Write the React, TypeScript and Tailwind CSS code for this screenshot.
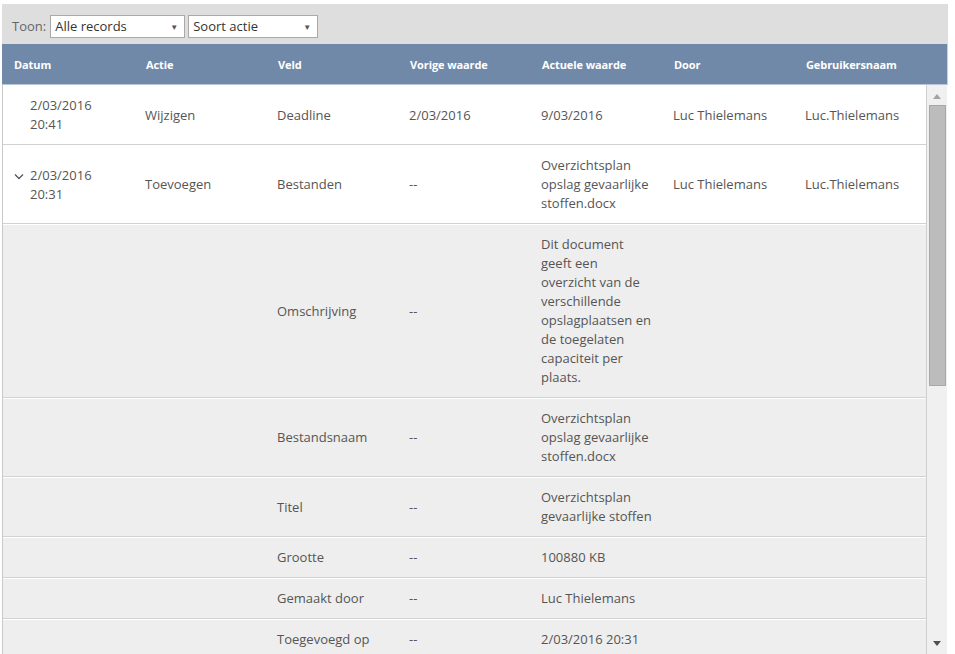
import React from "react";

const cols = "grid grid-cols-[repeat(7,132px)]";

type Row = {
  date?: [string, string];
  chevron?: boolean;
  actie?: string;
  veld: string;
  vorige: string;
  actuele: string[];
  door?: string;
  gebruiker?: string;
  gray?: boolean;
};

const rows: Row[] = [
  { date: ["2/03/2016", "20:41"], actie: "Wijzigen", veld: "Deadline", vorige: "2/03/2016", actuele: ["9/03/2016"], door: "Luc Thielemans", gebruiker: "Luc.Thielemans" },
  { date: ["2/03/2016", "20:31"], chevron: true, actie: "Toevoegen", veld: "Bestanden", vorige: "--", actuele: ["Overzichtsplan", "opslag gevaarlijke", "stoffen.docx"], door: "Luc Thielemans", gebruiker: "Luc.Thielemans" },
  { gray: true, veld: "Omschrijving", vorige: "--", actuele: ["Dit document", "geeft een", "overzicht van de", "verschillende", "opslagplaatsen en", "de toegelaten", "capaciteit per", "plaats."] },
  { gray: true, veld: "Bestandsnaam", vorige: "--", actuele: ["Overzichtsplan", "opslag gevaarlijke", "stoffen.docx"] },
  { gray: true, veld: "Titel", vorige: "--", actuele: ["Overzichtsplan", "gevaarlijke stoffen"] },
  { gray: true, veld: "Grootte", vorige: "--", actuele: ["100880 KB"] },
  { gray: true, veld: "Gemaakt door", vorige: "--", actuele: ["Luc Thielemans"] },
  { gray: true, veld: "Toegevoegd op", vorige: "--", actuele: ["2/03/2016 20:31"] },
];

function Select({ label, w }: { label: string; w: string }) {
  return (
    <div className={`${w} h-[23px] bg-white border border-[#a9a9a9] flex items-center justify-between pl-[4px] pr-[6px] text-[13px] text-[#333]`}>
      <span>{label}</span>
      <span className="text-[8px] text-[#555]">▼</span>
    </div>
  );
}

export default function App() {
  return (
    <div className="h-[654px] overflow-hidden bg-white pt-[4px] pl-[2px] pr-[7px] font-['Open_Sans',sans-serif]">
      <div className="flex flex-col h-full">
        <div className="h-[40px] bg-[#dedede] flex items-center pl-[10px] gap-[3px] pt-[5px]">
          <span className="text-[13px] text-[#666] mr-[1px]">Toon:</span>
          <Select label="Alle records" w="w-[135px]" />
          <Select label="Soort actie" w="w-[130px]" />
        </div>
        <div className={`h-[41px] bg-[#7189a8] border-b border-[#b9c6d8] border-r border-r-[#c8d0dc] pl-[1px] ${cols} items-center text-[11px] font-bold text-white tracking-[-0.1px]`}>
          {["Datum", "Actie", "Veld", "Vorige waarde", "Actuele waarde", "Door", "Gebruikersnaam"].map((h) => (
            <div key={h} className="pl-[11px] pt-[3px]">{h}</div>
          ))}
        </div>
        <div className="flex flex-1 min-h-0">
          <div className="w-[925px] border-l border-[#c8c8c8] border-r border-r-[#cfcfcf] overflow-hidden text-[13px] leading-[19px] text-[#555]">
            {rows.map((r, i) => (
              <div
                key={i}
                className={`${cols} items-center py-[10px] border-t border-white border-b border-b-[#d2d2d2] ${r.gray ? "bg-[#eeeeee]" : "bg-white"}`}
              >
                <div className="pl-[11px] flex items-start">
                  <div className="w-[16px] h-[19px] flex items-center">
                    {r.chevron && (
                      <svg width="10" height="7" viewBox="0 0 10 7" className="mt-[2px]">
                        <path d="M1 1.5 L5 5.5 L9 1.5" stroke="#555" strokeWidth="1.3" fill="none" />
                      </svg>
                    )}
                  </div>
                  {r.date && (
                    <div>
                      <div>{r.date[0]}</div>
                      <div>{r.date[1]}</div>
                    </div>
                  )}
                </div>
                <div className="pl-[10px]">{r.actie}</div>
                <div className="pl-[10px]">{r.veld}</div>
                <div className="pl-[10px]">{r.vorige}</div>
                <div className="pl-[10px]">
                  {r.actuele.map((l, j) => (
                    <div key={j}>{l}</div>
                  ))}
                </div>
                <div className="pl-[10px]">{r.door}</div>
                <div className="pl-[10px]">{r.gebruiker}</div>
              </div>
            ))}
          </div>
          <div className="w-[20px] bg-[#f0f0f0] flex flex-col items-center pt-[9px] pb-[8px]">
            <svg width="8" height="5" viewBox="0 0 8 5"><path d="M0 5 L4 0 L8 5 Z" fill="#a3a3a3" /></svg>
            <div className="mt-[6px] w-[17px] h-[281px] bg-[#bcbcbc] border border-[#a8a8a8]" />
            <div className="flex-1" />
            <svg width="8" height="5" viewBox="0 0 8 5"><path d="M0 0 L8 0 L4 5 Z" fill="#505050" /></svg>
          </div>
        </div>
      </div>
    </div>
  );
}
